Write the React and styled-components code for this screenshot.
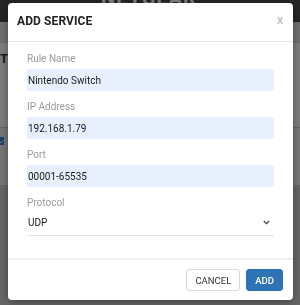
import React from 'react'
import styled, { createGlobalStyle } from 'styled-components'

const GlobalStyle = createGlobalStyle`
  html, body {
    margin: 0;
    padding: 0;
    height: 100%;
    overflow: hidden;
  }
  body {
    font-family: Roboto, "Liberation Sans", Arial, sans-serif;
    background: #cccccc;
  }
`

const Page = styled.div`
  width: 300px;
  height: 305px;
  display: flex;
  flex-direction: column;
  background: #cccccc;
`

const NavBar = styled.div`
  height: 22px;
  background: #4a4a4a;
  display: flex;
  justify-content: center;
  overflow: hidden;
`

const Brand = styled.div`
  margin-top: -12px;
  margin-left: -2px;
  font-size: 20px;
  font-weight: 700;
  letter-spacing: 1px;
  line-height: 20px;
  color: #ffffff;
`

const SubBar = styled.div`
  height: 21px;
  background: #dcdcdc;
`

const Content = styled.div`
  height: 85px;
  background: #f8f8f8;
  padding: 9px 0 0 0;
  box-sizing: border-box;
`

const Heading = styled.div`
  font-size: 13px;
  font-weight: 700;
  color: #333;
  line-height: 14px;
  padding-left: 0;
`

const TableRow = styled.div`
  height: 59px;
  background: #ececec;
  border-top: 1px solid #c8c8c8;
  border-bottom: 1px solid #c8c8c8;
  padding-top: 9px;
  box-sizing: border-box;
  margin-top: -1px;
`

const Check = styled.div`
  width: 8px;
  height: 8px;
  margin-left: -4px;
  background: #2f7de0;
  border-radius: 1px;
  display: flex;
  align-items: center;
  justify-content: flex-end;
`

const Overlay = styled.div`
  position: fixed;
  inset: 0;
  background: rgba(0, 0, 0, 0.5);
  padding: 3px 0 0 8px;
`

const Modal = styled.div`
  width: 285px;
  background: #ffffff;
  border-radius: 4px;
  box-shadow: 0 2px 8px rgba(0, 0, 0, 0.35);
  display: flex;
  flex-direction: column;
`

const Header = styled.div`
  height: 36px;
  border-bottom: 1px solid #e6e6e6;
  display: flex;
  align-items: center;
  justify-content: space-between;
  padding: 0 10px 2px 9px;
`

const Title = styled.h2`
  margin: 0;
  font-size: 12px;
  font-weight: 700;
  color: #222;
  letter-spacing: 0.1px;
`

const Close = styled.span`
  font-size: 12px;
  font-weight: 700;
  color: #c4c4c4;
  line-height: 12px;
  margin-top: -2px;
`

const Body = styled.div`
  padding: 10px 19px 22px 19px;
  display: flex;
  flex-direction: column;
`

const Field = styled.div`
  display: flex;
  flex-direction: column;
  margin-bottom: ${p => (p.$last ? 0 : 9)}px;
`

const Label = styled.label`
  font-size: 10px;
  line-height: 14px;
  color: #9b9b9b;
  margin-bottom: ${p => (p.$tight ? 2 : 3)}px;
`

const Input = styled.input`
  height: 22px;
  box-sizing: border-box;
  border: none;
  outline: none;
  background: #e8f0fe;
  padding: 0 1px;
  font-family: inherit;
  font-size: 10px;
  color: #1a1a1a;
`

const Select = styled.div`
  height: 24px;
  box-sizing: border-box;
  border-bottom: 1px solid #e3e3e3;
  display: flex;
  align-items: center;
  justify-content: space-between;
  padding: 0 4px 2px 1px;
  font-size: 10px;
  color: #1a1a1a;
`

const Footer = styled.div`
  border-top: 2px solid #efefef;
  padding: 9px 10px 9px;
  display: flex;
  justify-content: flex-end;
  gap: 6px;
`

const Button = styled.button`
  height: 22px;
  box-sizing: border-box;
  padding: 0 ${p => (p.$primary ? 8 : 8)}px;
  border-radius: 3px;
  font-family: inherit;
  font-size: 9.5px;
  border: 1px solid ${p => (p.$primary ? '#2e74b5' : '#d9d9d9')};
  background: ${p => (p.$primary ? '#2e74b5' : '#ffffff')};
  color: ${p => (p.$primary ? '#ffffff' : '#333333')};
  font-weight: ${p => (p.$primary ? 500 : 400)};
  min-width: ${p => (p.$primary ? 34 : 52)}px;
`

const Chevron = () => (
  <svg width="7" height="5" viewBox="0 0 7 5">
    <path d="M0.8 1 L3.5 3.7 L6.2 1" fill="none" stroke="#444" strokeWidth="1.3" />
  </svg>
)

const fields = [
  { label: 'Rule Name', value: 'Nintendo Switch' },
  { label: 'IP Address', value: '192.168.1.79' },
  { label: 'Port', value: '00001-65535' }
]

export default function App() {
  return (
    <>
      <GlobalStyle />
      <Page>
        <NavBar><Brand>NETGEAR</Brand></NavBar>
        <SubBar />
        <Content><Heading>T</Heading></Content>
        <TableRow>
          <Check>
            <svg width="5" height="5" viewBox="0 0 5 5">
              <path d="M0.5 2.5 L2 4 L4.5 1" fill="none" stroke="#fff" strokeWidth="1" />
            </svg>
          </Check>
        </TableRow>
      </Page>
      <Overlay>
        <Modal>
          <Header>
            <Title>ADD SERVICE</Title>
            <Close>x</Close>
          </Header>
          <Body>
            {fields.map(f => (
              <Field key={f.label}>
                <Label>{f.label}</Label>
                <Input value={f.value} readOnly />
              </Field>
            ))}
            <Field $last>
              <Label $tight>Protocol</Label>
              <Select>
                <span>UDP</span>
                <Chevron />
              </Select>
            </Field>
          </Body>
          <Footer>
            <Button>CANCEL</Button>
            <Button $primary>ADD</Button>
          </Footer>
        </Modal>
      </Overlay>
    </>
  )
}
